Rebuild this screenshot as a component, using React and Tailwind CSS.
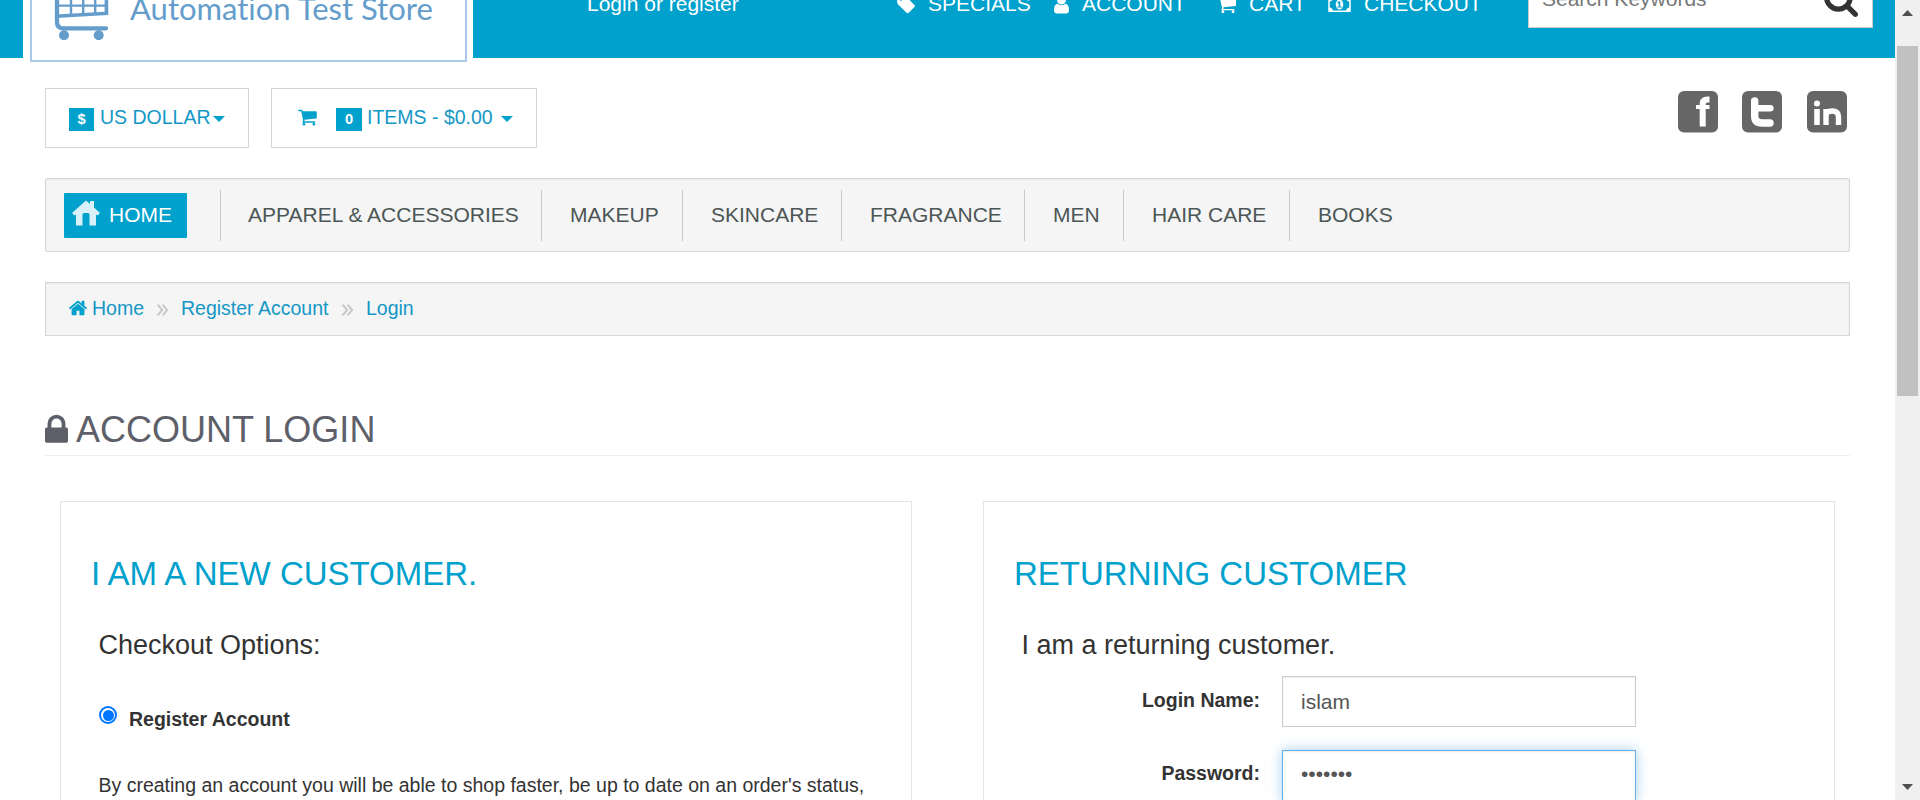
import React from "react";

const ICONS = {
  user: ["192 0 1408 1792", "M1536 1399q0 109-62.5 187t-150.5 78h-854q-88 0-150.5-78t-62.5-187q0-85 8.5-160.5t31.5-152 58.5-131 94-89 134.5-34.5q131 128 313 128t313-128q76 0 134.5 34.5t94 89 58.5 131 31.5 152 8.5 160.5zm-256-887q0 159-112.5 271.5t-271.5 112.5-271.5-112.5-112.5-271.5 112.5-271.5 271.5-112.5 271.5 112.5 112.5 271.5z"],
  cart: ["64 0 1664 1792", "M704 1536q0 52-38 90t-90 38-90-38-38-90 38-90 90-38 90 38 38 90zm896 0q0 52-38 90t-90 38-90-38-38-90 38-90 90-38 90 38 38 90zm128-1088v512q0 24-16.5 42.5t-40.5 21.5l-1044 122q13 60 13 70 0 16-24 64h920q26 0 45 19t19 45-19 45-45 19h-1024q-26 0-45-19t-19-45q0-11 8-31.5t16-36 21.5-40 15.5-29.5l-177-823h-204q-26 0-45-19t-19-45 19-45 45-19h256q16 0 28.5 6.5t19.5 15.5 13 24.5 8 26 5.5 29.5 4.5 26h1201q26 0 45 19t19 45z"],
  lock: ["320 0 1152 1792", "M640 768h512v-192q0-106-75-181t-181-75-181 75-75 181v192zm832 96v576q0 40-28 68t-68 28h-960q-40 0-68-28t-28-68v-576q0-40 28-68t68-28h32v-192q0-184 132-316t316-132 316 132 132 316v192h32q40 0 68 28t28 68z"],
  home: ["89 0 1614 1792", "M1472 992v480q0 26-19 45t-45 19h-384v-384h-256v384h-384q-26 0-45-19t-19-45v-480q0-1 .5-3t.5-3l575-474 575 474q1 2 1 6zm223-69l-62 74q-8 9-21 11h-3q-13 0-21-7l-692-577-692 577q-12 8-24 7-13-2-21-11l-62-74q-8-10-7-23.5t11-21.5l719-599q32-26 76-26t76 26l244 204v-195q0-14 9-23t23-9h192q14 0 23 9t9 23v408l219 182q10 8 11 21.5t-7 23.5z"],
  tag: ["128 0 1515 1792", "M576 448q0-53-37.5-90.5t-90.5-37.5-90.5 37.5-37.5 90.5 37.5 90.5 90.5 37.5 90.5-37.5 37.5-90.5zm1067 576q0 53-37 90l-491 492q-39 37-91 37-53 0-90-37l-715-716q-38-37-64.5-101t-26.5-117v-416q0-52 38-90t90-38h416q53 0 117 26.5t102 64.5l715 714q37 39 37 91z"],
  money: ["0 0 1920 1792", "M768 1152h384v-96h-128v-448h-114l-148 137 77 80q42-37 55-57h2v288h-128v96zm512-256q0 70-21 142t-59.5 134-101.5 101-138 39-138-39-101.5-101-59.5-134-21-142 21-142 59.5-134 101.5-101 138-39 138 39 101.5 101 59.5 134 21 142zm512 256v-512q-106 0-181-75t-75-181h-1152q0 106-75 181t-181 75v512q106 0 181 75t75 181h1152q0-106 75-181t181-75zm128-832v1152q0 26-19 45t-45 19h-1792q-26 0-45-19t-19-45v-1152q0-26 19-45t45-19h1792q26 0 45 19t19 45z"],
  search: ["64 128 1664 1664", "M1216 832q0-185-131.5-316.5t-316.5-131.5-316.5 131.5-131.5 316.5 131.5 316.5 316.5 131.5 316.5-131.5 131.5-316.5zm512 832q0 52-38 90t-90 38q-54 0-90-38l-343-342q-179 124-399 124-143 0-273.5-55.5t-225-150-150-225-55.5-273.5 55.5-273.5 150-225 225-150 273.5-55.5 273.5 55.5 225 150 150 225 55.5 273.5q0 220-124 399l343 343q37 37 37 90z"],
};

function Icon({ name, className }) {
  const [viewBox, d] = ICONS[name];
  return (
    <svg viewBox={viewBox} className={`shrink-0 ${className}`} fill="currentColor">
      <path d={d} />
    </svg>
  );
}

function Logo() {
  return (
    <div className="ml-[23px] h-[62px] w-[450px] shrink-0 bg-white pl-[7px]">
      <div className="flex h-[62px] w-[437px] border-2 border-t-0 border-[#a9c9e8] pl-[21px]">
        <svg width="57" height="42" viewBox="53 0 57 42" className="shrink-0" fill="none" stroke="#649dcb">
          <path d="M57 -2V22Q57 28.3 63 28.3H106" strokeWidth="4.3" strokeLinecap="round" />
          <path d="M56 16.3L108.2 13.2" strokeWidth="3.6" />
          <path d="M56 5.6H108" strokeWidth="2.2" />
          <path d="M71 -2V15M83.200 -2V15M95.200 -2V14" strokeWidth="2.4" />
          <path d="M106.400 -2V14" strokeWidth="3.6" />
          <circle cx="64" cy="35.200" r="5" fill="#649dcb" stroke="none" />
          <circle cx="98.700" cy="35.200" r="5" fill="#649dcb" stroke="none" />
        </svg>
        <span className="-mt-[10px] ml-[20px] whitespace-nowrap font-['Lato',sans-serif] text-[31px] leading-[36px] text-[#649dcb] [font-variant-ligatures:none]">
          Automation Test Store
        </span>
      </div>
    </div>
  );
}

const TOP_LINKS = [
  { icon: "tag", label: "SPECIALS", box: "w-[156px]", size: "h-[21px] w-[18px]", gap: "w-[31px]" },
  { icon: "user", label: "ACCOUNT", box: "w-[163.5px]", size: "h-[21px] w-[17px]", gap: "w-[29px]" },
  { icon: "cart", label: "CART", box: "w-[111.5px]", size: "h-[21px] w-[19px]", gap: "w-[32.5px]" },
  { icon: "money", label: "CHECKOUT", box: "w-[200px]", size: "h-[21px] w-[23px]", gap: "w-[36px]" },
];

function Header() {
  return (
    <header className="flex h-[58px] items-start bg-[#00a1cc] text-white">
      <Logo />
      <span className="-mt-[11px] ml-[114px] w-[310px] whitespace-nowrap text-[21px] leading-[30px]">Login or register</span>
      <nav className="-mt-[11px] flex h-[30px] w-[631px]">
        {TOP_LINKS.map((l) => (
          <a key={l.label} className={`flex shrink-0 items-center whitespace-nowrap text-[21px] leading-[30px] ${l.box}`}>
            <span className={`flex shrink-0 ${l.gap}`}>
              <Icon name={l.icon} className={l.size} />
            </span>
            {l.label}
          </a>
        ))}
      </nav>
      <div className="-mt-[18px] flex h-[46px] w-[345px] shrink-0 items-start justify-between border border-[#ccc] bg-white pl-[13px] pr-[14px]">
        <span className="mt-px text-[21px] leading-[30px] text-[#777]">Search Keywords</span>
        <Icon name="search" className="h-[34px] w-[34px] text-[#333]" />
      </div>
    </header>
  );
}

function Caret() {
  return (
    <svg width="12" height="6" viewBox="0 0 12 6" className="shrink-0" fill="#00a1cc">
      <path d="M0 0H12L6 6Z" />
    </svg>
  );
}

function Badge({ children, className }) {
  return (
    <span className={`flex h-[23px] shrink-0 items-center justify-center bg-[#00a1cc] pb-px text-[14.6px] font-bold leading-none text-white ${className}`}>
      {children}
    </span>
  );
}

function Toolbar() {
  return (
    <div className="mt-[30px] flex h-[60px] text-[19.5px] leading-[28px] text-[#1497c6]">
      <div className="flex h-[60px] w-[204px] items-start whitespace-nowrap border border-[#d5d5d5] pl-[23px] pt-[14px]">
        <Badge className="mt-[5px] w-[25px]">$</Badge>
        <span className="ml-[6px] w-[114px]">US DOLLAR</span>
        <span className="-ml-px flex h-[28px] items-center pt-[3px]"><Caret /></span>
      </div>
      <div className="ml-[22px] flex h-[60px] w-[266px] items-start whitespace-nowrap border border-[#d5d5d5] pl-[26px] pt-[14px]">
        <Icon name="cart" className="mt-[4px] h-[20px] w-[19px] text-[#00a1cc]" />
        <Badge className="ml-[19px] mt-[5px] w-[26px]">0</Badge>
        <span className="ml-[5px] w-[134px]">ITEMS - $0.00</span>
        <span className="flex h-[28px] items-center pt-[3px]"><Caret /></span>
      </div>
      <div className="ml-auto mr-[3px] mt-[3px] flex">
        <svg width="40" height="42" viewBox="0 0 40 42" fill="none" stroke="#fff">
          <rect width="40" height="41.5" rx="6" fill="#666" stroke="none" />
          <path d="M31.500 8.500H29.500Q24.700 8.500 24.700 13V35.500" strokeWidth="6" />
          <path d="M18 16H31.500" strokeWidth="4" />
        </svg>
        <svg width="40" height="42" viewBox="0 0 40 42" className="ml-[24px]" fill="none" stroke="#fff" strokeLinecap="round">
          <rect width="40" height="41.5" rx="6" fill="#666" stroke="none" />
          <path d="M12.700 10V25Q12.700 32 20 32H28" strokeWidth="7.4" />
          <path d="M14 17.200H28.300" strokeWidth="6.6" />
        </svg>
        <svg width="40" height="42" viewBox="0 0 40 42" className="ml-[25px]" fill="none" stroke="#fff">
          <rect width="40" height="41.5" rx="6" fill="#666" stroke="none" />
          <circle cx="10" cy="12.600" r="3" fill="#fff" stroke="none" />
          <path d="M10 18V34" strokeWidth="5.6" />
          <path d="M19 34V18M19 25Q19 20 25 20Q31.500 20 31.500 26V34" strokeWidth="5.4" />
        </svg>
      </div>
    </div>
  );
}

const CATEGORIES = [
  ["APPAREL & ACCESSORIES", "w-[321px] pl-[27px]"],
  ["MAKEUP", "w-[141px] pl-[28px]"],
  ["SKINCARE", "w-[159px] pl-[28px]"],
  ["FRAGRANCE", "w-[183px] pl-[28px]"],
  ["MEN", "w-[99px] pl-[28px]"],
  ["HAIR CARE", "w-[166px] pl-[28px]"],
  ["BOOKS", "w-[160px] pl-[28px]"],
];

function CategoryMenu() {
  return (
    <nav className="mt-[30px] flex h-[74px] items-start rounded-[2px] border border-[#d5d5d5] bg-[#f5f5f5] pl-[18px] shadow-[inset_0_1px_2px_rgba(0,0,0,0.05)]">
      <a className="mt-[14px] flex h-[45px] w-[123px] shrink-0 rounded-[1px] bg-[#00a1cc] text-[21px] leading-[43px] text-white">
        <svg width="28" height="26" viewBox="0 0 28 26" className="ml-[8px] mt-[7px] shrink-0" fill="#d8f1f8">
          <path d="M14 0.500L18 4V1H22V7.500L28 13L25.500 15.500L24 14.500V25.500H17.500V14.500Q17.500 13 16 13H12Q10.500 13 10.500 14.500V25.500H4V14.500L2.500 15.500L0 13Z" />
        </svg>
        <span className="ml-[9px]">HOME</span>
      </a>
      <div className="ml-[33px] flex pt-[11px]">
        {CATEGORIES.map(([label, box]) => (
          <a key={label} className={`h-[51px] shrink-0 whitespace-nowrap border-l border-[#c9c9c9] text-[21px] leading-[49px] text-[#4c5655] ${box}`}>
            {label}
          </a>
        ))}
      </div>
    </nav>
  );
}

function Chevrons() {
  return (
    <svg width="11" height="12" viewBox="0 0 11 12" className="ml-[13px] mr-[13px] mt-[3px] shrink-0" fill="none" stroke="#c8c8c8" strokeWidth="2">
      <path d="M0.700 0.700L5.200 6L0.700 11.300M5.700 0.700L10.200 6L5.700 11.300" />
    </svg>
  );
}

function Breadcrumb() {
  return (
    <div className="mt-[30px] flex h-[54px] items-center whitespace-nowrap border border-[#d5d5d5] bg-[#f5f5f5] pb-[2px] pl-[23px] text-[19.5px] leading-[28px] text-[#1497c6] shadow-[inset_0_1px_2px_rgba(0,0,0,0.05)]">
      <Icon name="home" className="mr-[5px] h-[20px] w-[18px] text-[#00a1cc]" />
      <span className="w-[52px]">Home</span>
      <Chevrons />
      <span className="w-[148px]">Register Account</span>
      <Chevrons />
      <span>Login</span>
    </div>
  );
}

function Card({ title, subtitle, children }) {
  return (
    <section className="h-[320px] w-[852px] shrink-0 border border-[#e5e5e5] px-[30px] pt-[48px]">
      <h2 className="whitespace-nowrap text-[33px] leading-[48px] text-[#00a1cc]">{title}</h2>
      <h4 className="mt-[27px] pl-[7.5px] text-[27px] leading-[40px] text-[#333]">{subtitle}</h4>
      {children}
    </section>
  );
}

function Field({ label, labelTop, children, className, focused }) {
  return (
    <div className={`flex items-start ${className}`}>
      <label className={`w-[246px] whitespace-nowrap text-right text-[19.5px] font-bold leading-[28px] text-[#333] ${labelTop}`}>{label}</label>
      <div
        className={`ml-[22px] flex h-[51px] w-[354px] items-center border bg-white pl-[18px] text-[21px] leading-[30px] text-[#555] ${
          focused
            ? "border-[#66afe9] pb-[4px] shadow-[inset_0_1px_2px_rgba(0,0,0,0.075),0_0_12px_rgba(102,175,233,0.6)]"
            : "border-[#ccc] shadow-[inset_0_1px_2px_rgba(0,0,0,0.075)]"
        }`}
      >
        {children}
      </div>
    </div>
  );
}

function Scrollbar() {
  return (
    <div className="flex h-[800px] w-[25px] shrink-0 flex-col items-center bg-[#f0f0f0]">
      <svg width="11" height="6" viewBox="0 0 11 6" className="mt-[10px] shrink-0" fill="#505050">
        <path d="M0 6H11L5.500 0Z" />
      </svg>
      <div className="mt-[30px] h-[350px] w-[21px] shrink-0 bg-[#c1c1c1]" />
      <svg width="11" height="6" viewBox="0 0 11 6" className="mb-[10px] mt-auto shrink-0" fill="#505050">
        <path d="M0 0H11L5.500 6Z" />
      </svg>
    </div>
  );
}

export default function App() {
  return (
    <div className="flex h-[800px] w-[1920px] overflow-hidden bg-white font-['Liberation_Sans',Arial,sans-serif]">
      <div className="h-[800px] w-[1895px] shrink-0 overflow-hidden">
        <Header />
        <main className="ml-[45px] w-[1805px]">
          <Toolbar />
          <CategoryMenu />
          <Breadcrumb />
          <div className="mt-[69px] flex h-[51px] items-start border-b border-[#eee] text-[36px] leading-[50px] text-[#5d6069]">
            <Icon name="lock" className="mt-[7px] h-[36px] w-[23px]" />
            <h1 className="ml-[8px]">ACCOUNT LOGIN</h1>
          </div>
          <div className="mt-[45px] flex gap-[71px] pl-[15px]">
            <Card title="I AM A NEW CUSTOMER." subtitle="Checkout Options:">
              <label className="mt-[41px] flex items-start pl-[8px] text-[19.5px] font-bold leading-[28px] text-[#333]">
                <span className="flex h-[18px] w-[18px] items-center justify-center rounded-full border-2 border-[#0075ff] bg-white">
                  <span className="h-[11px] w-[11px] rounded-full bg-[#0075ff]" />
                </span>
                <span className="-mt-[1px] ml-[12px]">Register Account</span>
              </label>
              <p className="mt-[38px] whitespace-nowrap pl-[7.5px] text-[19.5px] leading-[28px] text-[#333]">
                By creating an account you will be able to shop faster, be up to date on an order's status,
              </p>
            </Card>
            <Card title="RETURNING CUSTOMER" subtitle="I am a returning customer.">
              <Field label="Login Name:" labelTop="mt-[10px]" className="mt-[11px]">islam</Field>
              <Field label="Password:" labelTop="mt-[9px]" className="mt-[23px]" focused>•••••••</Field>
            </Card>
          </div>
        </main>
      </div>
      <Scrollbar />
    </div>
  );
}
